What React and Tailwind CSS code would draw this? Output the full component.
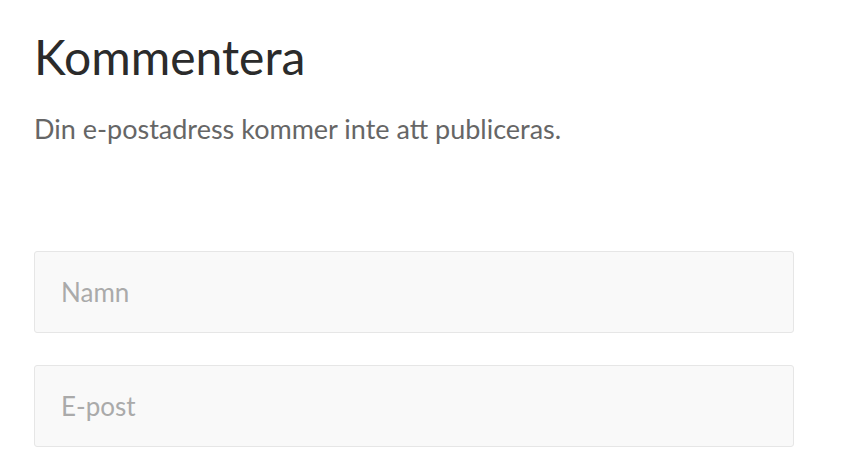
export default function App() {
  return (
    <div className="min-h-screen bg-white pl-[34px] pt-[28px] font-['Lato','Liberation_Sans',sans-serif]">
      <h2 className="text-[48px] leading-[58px] text-[#2b2b2b]">Kommentera</h2>
      <p className="mt-[27px] text-[27px] leading-[32px] text-[#666666]">
        Din e-postadress kommer inte att publiceras.
      </p>
      <form className="mt-[106px] flex w-[760px] flex-col gap-[32px]">
        <input
          type="text"
          placeholder="Namn"
          className="h-[82px] w-full rounded-[3px] border border-[#e6e6e6] bg-[#f9f9f9] px-[26px] text-[26px] text-[#333] placeholder:text-[#aaaaaa] outline-none"
        />
        <input
          type="email"
          placeholder="E-post"
          className="h-[82px] w-full rounded-[3px] border border-[#e6e6e6] bg-[#f9f9f9] px-[26px] text-[26px] text-[#333] placeholder:text-[#aaaaaa] outline-none"
        />
      </form>
    </div>
  );
}
